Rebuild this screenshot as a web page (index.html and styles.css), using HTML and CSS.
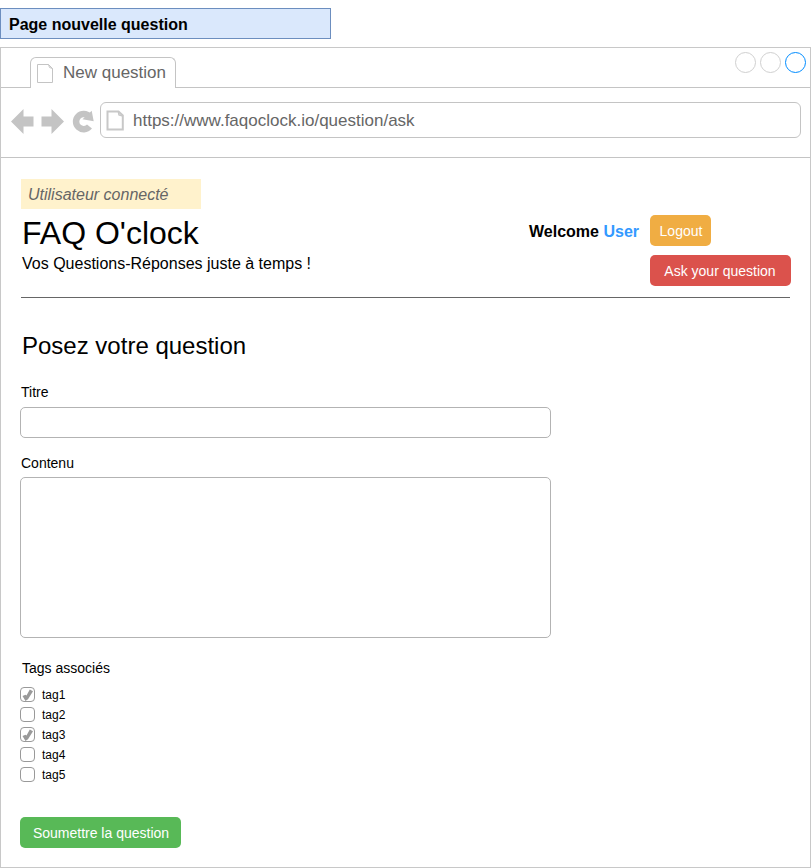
FILE: index.html
```html
<!DOCTYPE html>
<html lang="fr">
<head>
<meta charset="utf-8">
<title>New question</title>
<link rel="stylesheet" href="styles.css">
</head>
<body>
<div class="note">Page nouvelle question</div>
<div class="window">
  <div class="tabbar">
    <div class="tab">
      <svg class="tab-icon" width="17" height="20" viewBox="0 0 17 20"><path d="M.5.5H11.500L15.500 4.500V18.500H.5ZM11.500.5L12.500 3.500L15.500 4.500"/></svg>
      <span>New question</span>
    </div>
    <div class="controls"><i></i><i></i><i class="active"></i></div>
  </div>
  <div class="toolbar">
    <svg class="nav" width="84" height="26" viewBox="0 0 84 26">
      <path d="M0 13.500 12.500 1V8.500H22.500V18.500H12.500V26Z"/>
      <path d="M53 13.500 40.500 1V8.500H30.500V18.500H40.500V26Z"/>
      <path class="ring" d="M78.300 8.500A7.600 7.600 0 1 0 78.500 18.500"/>
      <path d="M80.700 2.800 82.700 13.200 71.500 11.300Z"/>
    </svg>
    <div class="address">
      <svg class="page-icon" width="18" height="21" viewBox="0 0 18 21"><path d="M1.500 1.500H12.500L16.800 5.500V19.500H1.500Z"/><path class="fold" d="M12.300 1.500 13 5 16.800 6"/></svg>
      <span>https://www.faqoclock.io/question/ask</span>
    </div>
  </div>
  <main class="page">
    <div class="status">Utilisateur connecté</div>
    <header class="header">
      <div class="brand">
        <h1>FAQ O'clock</h1>
        <p>Vos Questions-Réponses juste à temps !</p>
      </div>
      <div class="welcome">Welcome <span>User</span></div>
      <div class="actions">
        <button class="btn logout">Logout</button>
        <button class="btn ask">Ask your question</button>
      </div>
    </header>
    <form>
      <h2>Posez votre question</h2>
      <label class="label" for="title">Titre</label>
      <input class="field title" id="title" type="text">
      <label class="label content-label" for="content">Contenu</label>
      <textarea class="field content" id="content"></textarea>
      <div class="label tags-label">Tags associés</div>
      <ul class="tags">
        <li><span class="box"><svg width="13" height="13" viewBox="0 0 13 13"><path d="M1.500 8 4.500 6.700 5.500 7.500 8.800 1.500 12 3.300 7 11.300 4.500 13Z"/></svg></span>tag1</li>
        <li><span class="box"></span>tag2</li>
        <li><span class="box"><svg width="13" height="13" viewBox="0 0 13 13"><path d="M1.500 8 4.500 6.700 5.500 7.500 8.800 1.500 12 3.300 7 11.300 4.500 13Z"/></svg></span>tag3</li>
        <li><span class="box"></span>tag4</li>
        <li><span class="box"></span>tag5</li>
      </ul>
      <button class="btn submit" type="button">Soumettre la question</button>
    </form>
  </main>
</div>
</body>
</html>
```
FILE: styles.css
```css
* { box-sizing: border-box; }
body {
  margin: 0;
  padding-top: 8px;
  background: #fff;
  color: #000;
  font-family: "Liberation Sans", Arial, sans-serif;
}
h1, h2, p, ul { margin: 0; padding: 0; font-weight: normal; }
svg { display: block; }
.note {
  width: 331px;
  height: 31px;
  padding-left: 8px;
  border: 1px solid #6c8ebf;
  background: #dae8fc;
  font-size: 16px;
  font-weight: bold;
  line-height: 31px;
}
.window {
  height: 821px;
  margin-top: 8px;
  border: 1px solid #c8c8c8;
}
.tabbar {
  display: flex;
  justify-content: space-between;
  height: 40px;
  padding: 4px 4px 0 29px;
  border-bottom: 1px solid #c4c4c4;
}
.tab {
  display: flex;
  width: 146px;
  height: 31px;
  margin-top: 5px;
  padding-left: 6px;
  border: 1px solid #c4c4c4;
  border-bottom: 0;
  border-radius: 6px 6px 0 0;
  background: #fff;
  color: #666;
  font-size: 17px;
  line-height: 29px;
}
.tab-icon {
  margin: 6px 9px 0 0;
  fill: none;
  stroke: #c4c4c4;
}
.controls { display: flex; gap: 4px; }
.controls i {
  width: 21px;
  height: 21px;
  border: 1px solid #d0d0d0;
  border-radius: 50%;
}
.controls .active { border-color: #008cff; }
.toolbar {
  display: flex;
  height: 70px;
  padding: 14px 9px 0 10px;
  border-bottom: 1px solid #c4c4c4;
}
.nav { margin: 6px 5px 0 0; fill: #c4c4c4; overflow: visible; }
.nav .ring { fill: none; stroke: #c4c4c4; stroke-width: 6.500; }
.address {
  display: flex;
  flex: 1;
  height: 36px;
  padding-left: 5px;
  border: 1px solid #c4c4c4;
  border-radius: 6px;
  color: #666;
  font-size: 17px;
  line-height: 35px;
}
.page-icon {
  margin: 7px 9px 0 0;
  fill: none;
  stroke: #c8c8c8;
  stroke-width: 2;
}
.page-icon .fold { stroke-width: 1.500; }
.page { padding: 21px 19px 0; }
.status {
  width: 180px;
  height: 30px;
  margin-left: 1px;
  padding-left: 7px;
  background: #fff2cc;
  color: #666;
  font-size: 16px;
  font-style: italic;
  line-height: 31px;
}
.header {
  display: flex;
  height: 89px;
  margin: 0 1px;
  padding-top: 6px;
  border-bottom: 1px solid #666;
}
.brand { flex: 1; padding-left: 1px; }
.brand h1 { font-size: 32px; line-height: 36px; }
.brand p { margin-top: 3px; font-size: 16px; line-height: 20px; }
.welcome {
  margin-right: 11px;
  font-size: 16px;
  font-weight: bold;
  line-height: 33px;
}
.welcome span { color: #3399ff; }
.actions {
  display: flex;
  flex-direction: column;
  align-items: flex-start;
  gap: 9px;
  width: 141px;
  margin-right: -1px;
}
.btn {
  height: 31px;
  padding: 1px 0 0;
  border: 0;
  border-radius: 5px;
  color: #fff;
  font-family: inherit;
  font-size: 14px;
}
.logout { width: 61px; padding-left: 1px; background: #f0ad43; }
.ask { width: 141px; padding-right: 1px; background: #db524c; }
h2 {
  padding: 34px 0 0 2px;
  font-size: 24px;
  line-height: 28px;
}
.label {
  display: block;
  margin: 24px 0 0 1px;
  font-size: 14px;
  line-height: 16px;
}
.field {
  display: block;
  width: 531px;
  border: 1px solid #b3b3b3;
  border-radius: 5px;
  outline: 0;
  resize: none;
}
.title { height: 31px; margin-top: 7px; }
.content-label { margin-top: 17px; }
.content { height: 161px; margin-top: 6px; }
.tags-label { margin: 22px 0 0 2px; }
.tags {
  display: grid;
  gap: 5px;
  margin-top: 11px;
  list-style: none;
}
.tags li {
  display: flex;
  gap: 7px;
  height: 15px;
  font-size: 12px;
  line-height: 16px;
}
.box {
  width: 15px;
  height: 15px;
  border: 1px solid #999;
  border-radius: 4px;
  fill: #999;
}
.submit { width: 161px; margin-top: 35px; padding-left: 1px; background: #58b957; }
```
